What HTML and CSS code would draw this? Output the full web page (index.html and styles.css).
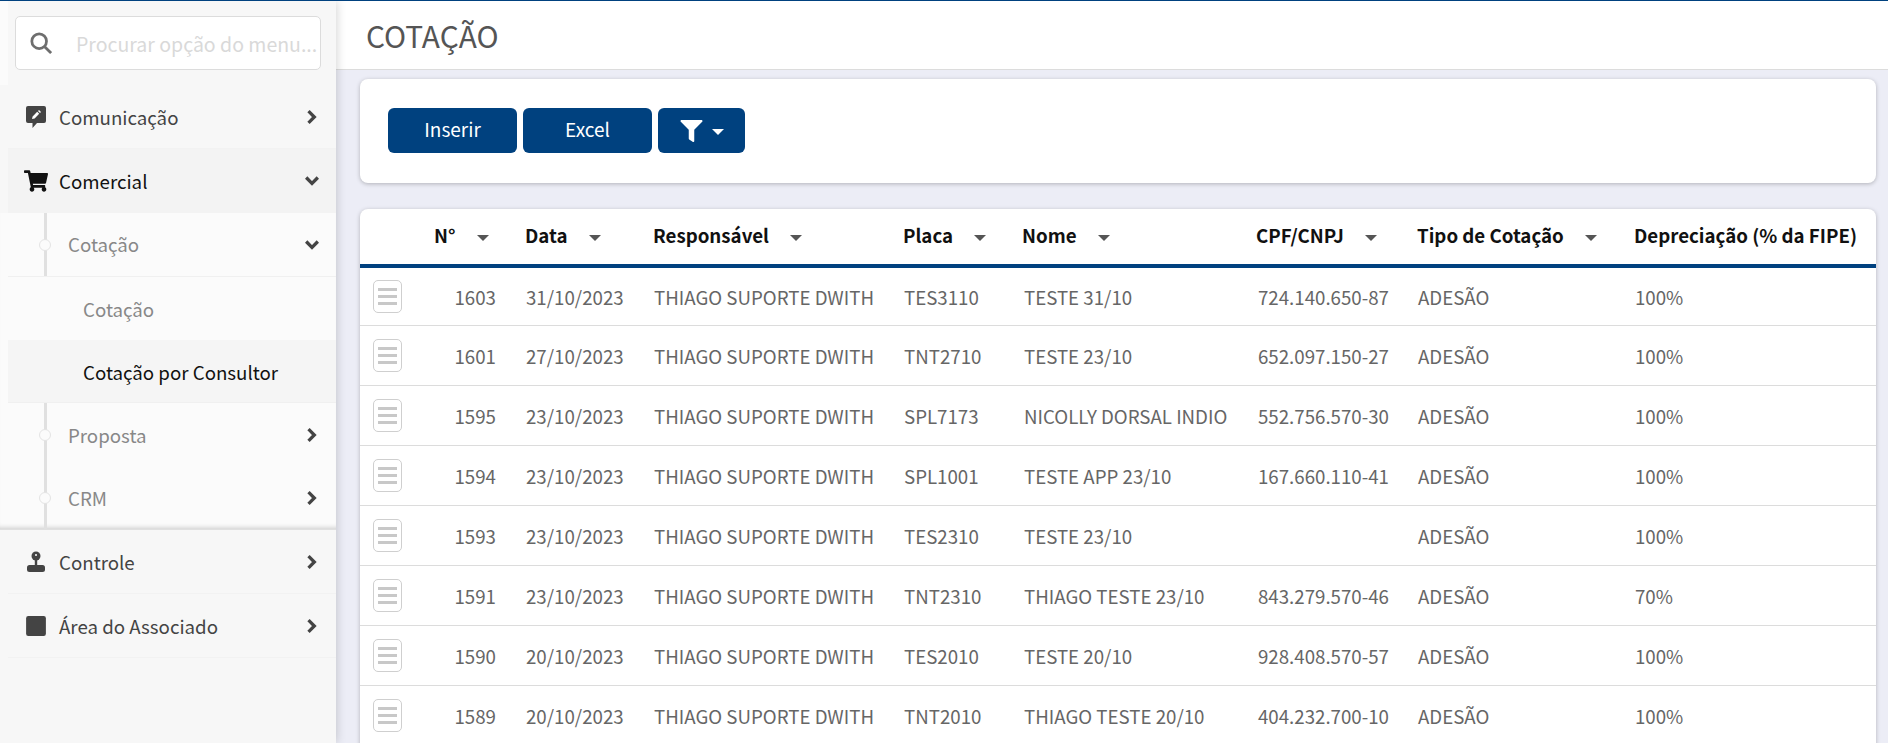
FILE: index.html
```html
<!DOCTYPE html>
<html lang="pt-BR">
<head>
    <meta charset="UTF-8">
    <title>Cotação</title>
    <link rel="stylesheet" href="styles.css">
</head>
<body>
    <aside class="sidebar">
        <div class="search-area">
            <div class="search-box">
                <svg class="search-icon" viewBox="0 0 24 24"><circle cx="10" cy="10" r="8"/><path d="M16 16l7 7"/></svg>
                <span class="search-text">Procurar opção do menu...</span>
            </div>
        </div>
        <nav class="menu">
            <a class="menu-item">
                <svg class="menu-icon" viewBox="0 0 22 22"><path d="M3 0h16a2 2 0 0 1 2 2v13a2 2 0 0 1-2 2h-7l-4.500 5v-5H3a2 2 0 0 1-2-2V2a2 2 0 0 1 2-2z"/><path class="pen" d="M7 13l.6-2.600 4.600-4.600 2 2-4.600 4.600zM13 5l1-1 2 2-1 1z"/></svg>
                <span class="menu-label">Comunicação</span>
                <svg class="chevron" viewBox="0 0 12 12"><path d="M3 1l5 5-5 5"/></svg>
            </a>
            <a class="menu-item open">
                <svg class="menu-icon" viewBox="0 0 576 512"><path d="M528.12 301.319l47.273-208C578.806 78.301 567.391 64 551.99 64H159.208l-9.166-44.81C147.758 8.021 137.93 0 126.529 0H24C10.745 0 0 10.745 0 24v16c0 13.255 10.745 24 24 24h69.883l70.248 343.435C147.325 417.1 136 435.222 136 456c0 30.928 25.072 56 56 56s56-25.072 56-56c0-15.674-6.447-29.835-16.824-40h209.647C430.447 426.165 424 440.326 424 456c0 30.928 25.072 56 56 56s56-25.072 56-56c0-22.172-12.888-41.332-31.579-50.405l5.517-24.276c3.413-15.018-8.002-29.319-23.403-29.319H218.117l-6.545-32h293.145c11.206 0 20.92-7.754 23.403-18.681z"/></svg>
                <span class="menu-label">Comercial</span>
                <svg class="chevron" viewBox="0 0 12 12"><path d="M1 3l5 5 5-5"/></svg>
            </a>
            <div class="submenu">
                <a class="sub-item bordered">
                    <span class="sub-dot"></span>
                    <span class="menu-label">Cotação</span>
                    <svg class="chevron" viewBox="0 0 12 12"><path d="M1 3l5 5 5-5"/></svg>
                </a>
                <a class="leaf-item">Cotação</a>
                <a class="leaf-item active">Cotação por Consultor</a>
                <a class="sub-item">
                    <span class="sub-dot"></span>
                    <span class="menu-label">Proposta</span>
                    <svg class="chevron" viewBox="0 0 12 12"><path d="M3 1l5 5-5 5"/></svg>
                </a>
                <a class="sub-item last">
                    <span class="sub-dot"></span>
                    <span class="menu-label">CRM</span>
                    <svg class="chevron" viewBox="0 0 12 12"><path d="M3 1l5 5-5 5"/></svg>
                </a>
            </div>
            <a class="menu-item">
                <svg class="menu-icon" viewBox="0 0 20 22"><circle cx="10" cy="5" r="4.500"/><rect x="8.800" y="8" width="2.400" height="7"/><rect x="1" y="14" width="18" height="7" rx="2.500"/><circle class="pen" cx="10" cy="4" r="1"/></svg>
                <span class="menu-label">Controle</span>
                <svg class="chevron" viewBox="0 0 12 12"><path d="M3 1l5 5-5 5"/></svg>
            </a>
            <a class="menu-item">
                <svg class="menu-icon" viewBox="0 0 20 20"><rect x="1" y="1" width="18" height="18" rx="2"/></svg>
                <span class="menu-label">Área do Associado</span>
                <svg class="chevron" viewBox="0 0 12 12"><path d="M3 1l5 5-5 5"/></svg>
            </a>
        </nav>
    </aside>

    <main class="content">
        <header class="page-header">
            <h1>COTAÇÃO</h1>
        </header>

        <section class="card toolbar">
            <button class="btn">Inserir</button>
            <button class="btn">Excel</button>
            <button class="btn btn-filter">
                <svg class="filter-icon" viewBox="0 0 512 512"><path d="M487.976 0H24.028C2.71 0-8.047 25.866 7.058 40.971L192 225.941V432c0 7.831 3.821 15.170 10.237 19.662l80 55.980C298.020 518.690 320 507.493 320 487.980V225.941l184.947-184.970C520.021 25.896 509.338 0 487.976 0z"/></svg>
                <span class="caret"></span>
            </button>
        </section>

        <section class="card table-card">
            <table class="grid">
                <colgroup>
                    <col class="col-action">
                    <col class="col-num">
                    <col class="col-date">
                    <col class="col-resp">
                    <col class="col-plate">
                    <col class="col-name">
                    <col class="col-doc">
                    <col class="col-type">
                    <col>
                </colgroup>
                <thead>
                    <tr>
                        <th></th>
                        <th class="th-num">N°<span class="sort"></span></th>
                        <th>Data<span class="sort"></span></th>
                        <th>Responsável<span class="sort"></span></th>
                        <th>Placa<span class="sort"></span></th>
                        <th>Nome<span class="sort"></span></th>
                        <th>CPF/CNPJ<span class="sort"></span></th>
                        <th>Tipo de Cotação<span class="sort"></span></th>
                        <th>Depreciação (% da FIPE)</th>
                    </tr>
                </thead>
                <tbody>
                    <tr>
                        <td><span class="row-btn"><i></i><i></i><i></i></span></td>
                        <td class="td-num">1603</td><td>31/10/2023</td><td>THIAGO SUPORTE DWITH</td><td>TES3110</td><td>TESTE 31/10</td><td>724.140.650-87</td><td>ADESÃO</td><td>100%</td>
                    </tr>
                    <tr>
                        <td><span class="row-btn"><i></i><i></i><i></i></span></td>
                        <td class="td-num">1601</td><td>27/10/2023</td><td>THIAGO SUPORTE DWITH</td><td>TNT2710</td><td>TESTE 23/10</td><td>652.097.150-27</td><td>ADESÃO</td><td>100%</td>
                    </tr>
                    <tr>
                        <td><span class="row-btn"><i></i><i></i><i></i></span></td>
                        <td class="td-num">1595</td><td>23/10/2023</td><td>THIAGO SUPORTE DWITH</td><td>SPL7173</td><td>NICOLLY DORSAL INDIO</td><td>552.756.570-30</td><td>ADESÃO</td><td>100%</td>
                    </tr>
                    <tr>
                        <td><span class="row-btn"><i></i><i></i><i></i></span></td>
                        <td class="td-num">1594</td><td>23/10/2023</td><td>THIAGO SUPORTE DWITH</td><td>SPL1001</td><td>TESTE APP 23/10</td><td>167.660.110-41</td><td>ADESÃO</td><td>100%</td>
                    </tr>
                    <tr>
                        <td><span class="row-btn"><i></i><i></i><i></i></span></td>
                        <td class="td-num">1593</td><td>23/10/2023</td><td>THIAGO SUPORTE DWITH</td><td>TES2310</td><td>TESTE 23/10</td><td></td><td>ADESÃO</td><td>100%</td>
                    </tr>
                    <tr>
                        <td><span class="row-btn"><i></i><i></i><i></i></span></td>
                        <td class="td-num">1591</td><td>23/10/2023</td><td>THIAGO SUPORTE DWITH</td><td>TNT2310</td><td>THIAGO TESTE 23/10</td><td>843.279.570-46</td><td>ADESÃO</td><td>70%</td>
                    </tr>
                    <tr>
                        <td><span class="row-btn"><i></i><i></i><i></i></span></td>
                        <td class="td-num">1590</td><td>20/10/2023</td><td>THIAGO SUPORTE DWITH</td><td>TES2010</td><td>TESTE 20/10</td><td>928.408.570-57</td><td>ADESÃO</td><td>100%</td>
                    </tr>
                    <tr>
                        <td><span class="row-btn"><i></i><i></i><i></i></span></td>
                        <td class="td-num">1589</td><td>20/10/2023</td><td>THIAGO SUPORTE DWITH</td><td>TNT2010</td><td>THIAGO TESTE 20/10</td><td>404.232.700-10</td><td>ADESÃO</td><td>100%</td>
                    </tr>
                </tbody>
            </table>
        </section>
    </main>
</body>
</html>
```

FILE: styles.css
```css
html, body {
    height: 100%;
}
body {
    margin: 0;
    display: flex;
    overflow: hidden;
    border-top: 1px solid #00417f;
    box-sizing: border-box;
    background-color: #ecedf6;
    font-family: "Noto Sans CJK KR", "Noto Sans", sans-serif;
    font-size: 18.7px;
    color: #555;
}

/* menu lateral */
.sidebar {
    width: 336px;
    flex-shrink: 0;
    background-color: #f7f7f7;
    box-shadow: 0 0 10px rgba(0,0,0,0.2);
    position: relative;
    z-index: 2;
}
.search-area {
    height: 84px;
    box-sizing: border-box;
    padding: 15px 15px 0 7px;
    border-left: 8px solid #fbfbfb;
}
.search-box {
    height: 54px;
    box-sizing: border-box;
    display: flex;
    align-items: center;
    background-color: white;
    border: 1px solid #dcdcdc;
    border-radius: 5px;
    padding-left: 14px;
}
.search-icon {
    width: 22px;
    height: 22px;
    fill: none;
    stroke: #6e6e6e;
    stroke-width: 3;
    margin-right: 24px;
}
.search-text {
    font-size: 19.5px;
    color: #d9d9d9;
    white-space: nowrap;
}
.menu-item, .sub-item {
    display: flex;
    align-items: center;
    height: 64px;
    margin-left: 8px;
    box-sizing: border-box;
    border-bottom: 1px solid #f2f2f2;
    color: #444;
}
.menu-item.open {
    background-color: #f3f3f3;
    border-bottom: none;
    color: #111;
}
.menu-icon {
    width: 22px;
    height: 22px;
    margin-left: 17px;
    margin-right: 12px;
    fill: #444;
}
.menu-item.open .menu-icon {
    fill: #111;
    width: 24px;
    margin-left: 16px;
    margin-right: 11px;
}
.pen {
    fill: white;
}
.menu-label {
    flex: 1;
    padding-bottom: 1px;
}
.chevron {
    width: 14px;
    height: 14px;
    margin-right: 17px;
    fill: none;
    stroke: #444;
    stroke-width: 2.8;
}
.submenu {
    background-color: #fbfbfb;
    box-shadow: inset 0 -5px 5px -4px rgba(0,0,0,0.2);
    border-bottom: 1px solid #e0e0e0;
}
.sub-item {
    position: relative;
    height: 64px;
    padding-left: 60px;
    border-bottom: none;
    color: #888;
}
.sub-item.bordered {
    height: 64px;
    border-bottom: 1px solid #f0f0f0;
}
.sub-item.bordered .menu-label {
    padding-bottom: 3px;
}
.sub-item.last {
    height: 62px;
}
.sub-item::before {
    content: "";
    position: absolute;
    left: 36px;
    top: 0;
    bottom: 0;
    width: 3px;
    background-color: #e0e0e0;
}
.sub-dot {
    position: absolute;
    left: 31px;
    top: 50%;
    margin-top: -6px;
    width: 10px;
    height: 10px;
    border: 1px solid #e4e4e4;
    border-radius: 50%;
    background-color: #fbfbfb;
}
.leaf-item {
    display: flex;
    align-items: center;
    height: 63px;
    margin-left: 8px;
    padding-left: 75px;
    box-sizing: border-box;
    color: #888;
}
.leaf-item.active {
    background-color: #f5f5f5;
    border-bottom: 1px solid #f0f0f0;
    color: #111;
}

/* conteudo */
.content {
    flex: 1;
    min-width: 0;
    padding-right: 12px;
}
.page-header {
    height: 69px;
    box-sizing: border-box;
    margin-right: -12px;
    padding-left: 30px;
    background-color: white;
    border-bottom: 1px solid #dcdcdc;
    display: flex;
    align-items: center;
}
h1 {
    margin: 0;
    font-size: 29.8px;
    font-weight: 400;
    color: #555;
}
.card {
    margin-left: 24px;
    background-color: white;
    border-radius: 8px;
    box-shadow: 0 1px 4px rgba(0,0,0,0.25);
}
.toolbar {
    margin-top: 9px;
    height: 104px;
    box-sizing: border-box;
    padding: 29px 28px;
    display: flex;
    gap: 6px;
}
.btn {
    width: 129px;
    height: 45px;
    padding: 0 0 4px;
    border: none;
    border-radius: 6px;
    background-color: #00417f;
    color: white;
    font-family: inherit;
    font-size: 19px;
}
.btn-filter {
    width: 87px;
    padding: 0;
    display: flex;
    align-items: center;
    justify-content: center;
    gap: 9px;
}
.filter-icon {
    width: 23px;
    height: 22px;
    fill: white;
}
.caret {
    margin-top: 2px;
    border-left: 6px solid transparent;
    border-right: 6px solid transparent;
    border-top: 6px solid white;
}
.table-card {
    margin-top: 26px;
    border-radius: 8px 8px 0 0;
}
.grid {
    width: 100%;
    table-layout: fixed;
    border-collapse: collapse;
}
.col-action { width: 60px; }
.col-num { width: 95px; }
.col-date { width: 128px; }
.col-resp { width: 250px; }
.col-plate { width: 119px; }
.col-name { width: 234px; }
.col-doc { width: 161px; }
.col-type { width: 217px; }
th {
    height: 51px;
    padding: 0 0 4px 10px;
    text-align: left;
    font-size: 18.7px;
    font-weight: 700;
    color: #111;
    white-space: nowrap;
    border-bottom: 4px solid #00417f;
}
th.th-num {
    padding-left: 14px;
}
.sort {
    display: inline-block;
    margin-left: 21px;
    vertical-align: middle;
    border-left: 6px solid transparent;
    border-right: 6px solid transparent;
    border-top: 6px solid #555;
}
td {
    height: 59px;
    padding: 0 0 0 11px;
    border-bottom: 1px solid #dcdcdc;
    white-space: nowrap;
    color: #666;
}
td:nth-child(6), td:nth-child(7) {
    padding-left: 12px;
}
td.td-num {
    padding: 0 19px 0 0;
    text-align: right;
}
tbody tr:first-child td {
    height: 57px;
}
.row-btn {
    width: 29px;
    height: 33px;
    margin-left: 2px;
    box-sizing: border-box;
    display: flex;
    flex-direction: column;
    justify-content: center;
    gap: 4px;
    align-items: center;
    background-color: white;
    border: 1px solid #cfcfcf;
    border-radius: 5px;
}
.row-btn i {
    width: 19px;
    height: 3px;
    background-color: #c8c8c8;
}
```
